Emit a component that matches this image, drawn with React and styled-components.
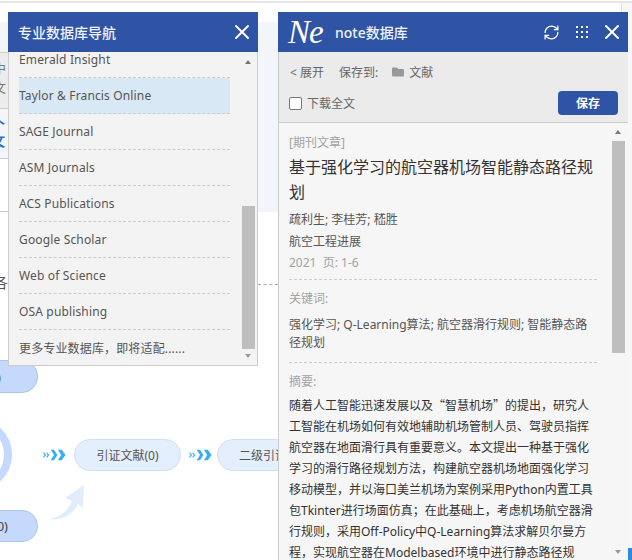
import React from 'react';
import styled, { createGlobalStyle } from 'styled-components';
import { FaFolder } from 'react-icons/fa';
import { RefreshCw, X } from 'lucide-react';

const GlobalStyle = createGlobalStyle`
  html, body {
    margin: 0;
    padding: 0;
    background: #fff;
    overflow: hidden;
  }
  * {
    box-sizing: border-box;
  }
`;

const FONT = '"Noto Sans", "Noto Sans CJK SC", sans-serif';

const Canvas = styled.div`
  position: relative;
  width: 632px;
  height: 560px;
  overflow: hidden;
  background: #fff;
  font-family: ${FONT};
  color: #444;
`;

const TopRule = styled.div`
  height: 2px;
  margin-top: 1px;
  background: #e6e6e6;
`;

const Band = styled.div`
  position: absolute;
  left: 0;
  top: 22px;
  width: 278px;
  height: 190px;
  background: #f2f6fb;
`;

const SideStrip = styled.div`
  position: absolute;
  right: 0;
  top: 3px;
  width: 11px;
  height: 557px;
  background: #f7f7f7;
  border-left: 1px solid #e4e4e4;
`;

const BlueCorner = styled.div`
  position: absolute;
  right: 0;
  top: 548px;
  width: 4px;
  height: 12px;
  background: #2a8be6;
`;

const CutBox = styled.div`
  position: absolute;
  left: 0;
  top: ${(p) => p.$top}px;
  width: 10px;
  height: ${(p) => p.$height}px;
  background: ${(p) => p.$fill};
  border-top: 1px solid #ccc;
  border-bottom: 1px solid #ccc;
  overflow: hidden;
  padding-top: 6px;
`;

const CutText = styled.div`
  margin-left: -7px;
  font-size: 13px;
  line-height: 19px;
  color: #777;
`;

const CutLink = styled.div`
  position: absolute;
  left: -9px;
  top: 117px;
  width: 16px;
  font-size: 14px;
  line-height: 16px;
  font-weight: 700;
  color: #2f6fc0;
`;

const CutLabel = styled.div`
  position: absolute;
  left: -7px;
  top: 271px;
  font-size: 15px;
  color: #555;
`;

const DashLine = styled.div`
  position: absolute;
  left: 258px;
  top: 284px;
  width: 20px;
  border-top: 1px dashed #aaa;
`;

const SidePill = styled.div`
  position: absolute;
  left: -60px;
  top: ${(p) => p.$top}px;
  width: 98px;
  height: ${(p) => p.$height}px;
  padding-right: ${(p) => p.$inset}px;
  display: flex;
  align-items: center;
  justify-content: flex-end;
  border: 1px solid #abc5ef;
  border-radius: 16px;
  background: #c5d9fc;
  font-size: 13px;
  color: #444;
`;

const Ring = styled.div`
  position: absolute;
  left: -61px;
  top: 418px;
  width: 73px;
  height: 73px;
  border: 8px solid #c5d9fc;
  border-radius: 50%;
`;

const FlowRow = styled.div`
  position: absolute;
  left: 35px;
  top: 439px;
  display: flex;
  align-items: center;
`;

const FlowPill = styled.div`
  flex: none;
  width: 107px;
  height: 32px;
  display: flex;
  align-items: center;
  justify-content: ${(p) => (p.$start ? 'flex-start' : 'center')};
  padding-left: ${(p) => (p.$start ? '21px' : '0')};
  border: 1px solid #cfe0f4;
  border-radius: 16px;
  background: #e3effc;
  font-size: 12px;
  color: #555;
  white-space: nowrap;
`;

const ChevronSvg = styled.svg`
  flex: none;
  margin: 0 ${(p) => p.$gap}px 0 8px;
`;

const Chevrons = ({ gap }) => (
  <ChevronSvg $gap={gap} width="23" height="12" viewBox="0 0 24 12">
    <path d="M0.5 3.5 L2.5 6 L0.5 8.5" fill="none" stroke="#45b4f2" strokeWidth="1.3" />
    <path d="M3.8 3.5 L5.8 6 L3.8 8.5" fill="none" stroke="#45b4f2" strokeWidth="1.3" />
    <path d="M8 0.5 H11.5 L15 6 L11.5 11.5 H8 L11.5 6 Z" fill="#35b0f5" />
    <path d="M15.5 0.5 H19.5 L23.5 6 L19.5 11.5 H15.5 L19 6 Z" fill="#35b0f5" />
  </ChevronSvg>
);

const CurveSvg = styled.svg`
  position: absolute;
  left: 49px;
  top: 484px;
`;

const CurveArrow = () => (
  <CurveSvg width="36" height="36" viewBox="0 0 36 36">
    <defs>
      <linearGradient id="curveFade" x1="0" y1="1" x2="1" y2="0">
        <stop offset="0" stopColor="#d3e4f8" stopOpacity="0.7" />
        <stop offset="1" stopColor="#e2eefb" />
      </linearGradient>
    </defs>
    <path d="M0 35 C12 33 20 26 23 17 L16 14 L35 1 L34 24 L29 20 C25 30 12 37 0 35 Z" fill="url(#curveFade)" />
  </CurveSvg>
);

const Panel = styled.section`
  position: absolute;
  left: ${(p) => p.$left}px;
  top: 12px;
  width: ${(p) => p.$width}px;
  height: ${(p) => p.$height}px;
  display: flex;
  flex-direction: column;
  overflow: hidden;
`;

const PanelHeader = styled.header`
  flex: none;
  height: 40px;
  display: flex;
  align-items: center;
  padding: 0 4px 0 10px;
  background: #2f54a5;
  color: #fff;
`;

const HeaderTitle = styled.h2`
  flex: 1;
  margin: 0;
  font-size: 14px;
  font-weight: 500;
  color: #eef3fc;
`;

const CloseIcon = styled(X)`
  display: block;
  flex: none;
`;

const NavBody = styled.div`
  position: relative;
  flex: 1;
  min-height: 0;
  overflow: hidden;
  padding: 0 27px 0 10px;
  background: #f3f3f3;
  border: 1px solid #ccc;
  border-top: none;
`;

const NavList = styled.ul`
  list-style: none;
  margin: -10px 0 0;
  padding: 0;
`;

const NavItem = styled.li`
  height: 36px;
  display: flex;
  align-items: center;
  border-bottom: 1px dashed #ccc;
  background: ${(p) => (p.$active ? '#d9e8f5' : 'transparent')};
  font-size: 12px;
  letter-spacing: 0.15px;
  color: #555;
  white-space: nowrap;
`;

const Scrollbar = styled.div`
  position: absolute;
  right: ${(p) => p.$right}px;
  top: 0;
  bottom: 0;
  width: 13px;
`;

const ScrollThumb = styled.div`
  position: absolute;
  left: 0;
  right: 0;
  top: ${(p) => p.$top}px;
  height: ${(p) => p.$height}px;
  background: #bebebe;
`;

const ScrollArrow = styled.div`
  position: absolute;
  left: 3px;
  ${(p) => (p.$down ? `bottom: ${p.$offset}px;` : `top: ${p.$offset}px;`)}
  width: 0;
  height: 0;
  border-left: 3.5px solid transparent;
  border-right: 3.5px solid transparent;
  ${(p) => (p.$down ? 'border-top: 4px solid #9a9a9a;' : 'border-bottom: 4px solid #777;')}
`;

const Logo = styled.span`
  flex: none;
  width: 47px;
  font-family: "Liberation Serif", serif;
  font-style: italic;
  font-size: 33px;
  line-height: 40px;
  letter-spacing: -1px;
  color: #fff;
`;

const HeaderActions = styled.div`
  display: flex;
  align-items: center;
  gap: 16px;
`;

const HeaderClose = styled(CloseIcon)`
  margin-left: -4px;
`;

const Toolbar = styled.div`
  flex: none;
  height: 71px;
  padding: 10px 10px 0 10px;
  background: #ebebeb;
  border-left: 1px solid #ccc;
  border-bottom: 1px solid #ccc;
  font-size: 12px;
  color: #666;
`;

const ToolRow = styled.div`
  display: flex;
  align-items: center;
  height: 20px;
`;

const SaveRow = styled(ToolRow)`
  height: 24px;
  margin-top: 9px;
  justify-content: space-between;
`;

const Expand = styled.span`
  margin: 0 15px 0 1px;
`;

const FolderName = styled.span`
  margin-left: 5px;
`;

const FolderIcon = styled(FaFolder)`
  margin-left: 14px;
  color: #999;
`;

const CheckLabel = styled.label`
  display: flex;
  align-items: center;
  gap: 5px;
`;

const CheckBox = styled.span`
  width: 13px;
  height: 13px;
  border: 1px solid #767676;
  border-radius: 2px;
  background: #fff;
`;

const SaveButton = styled.button`
  width: 60px;
  height: 24px;
  padding: 0;
  border: none;
  border-radius: 4px;
  background: #2f54a5;
  color: #fff;
  font-family: ${FONT};
  font-size: 12px;
  font-weight: 700;
`;

const Article = styled.article`
  position: relative;
  flex: 1;
  min-height: 0;
  overflow: hidden;
  padding: 10px 31px 0 10px;
  background: #f6f6f6;
  border-left: 1px solid #ccc;
  font-size: 12px;
  color: #444;
`;

const Muted = styled.div`
  color: #a3a3a3;
  line-height: 20px;
`;

const ArticleTitle = styled.h1`
  margin: 2px 0 4px;
  font-size: 16px;
  line-height: 25px;
  font-weight: 400;
  color: #333;
`;

const MetaLine = styled.div`
  line-height: 22px;
  color: #555;
`;

const Section = styled.div`
  padding-bottom: 6px;
  border-bottom: 1px dashed #ccc;
`;

const KeyLabel = styled(Muted)`
  margin-top: 9px;
`;

const Keywords = styled.div`
  margin-top: 7px;
  line-height: 18px;
  color: #555;
  padding-bottom: 10px;
  border-bottom: 1px dashed #ccc;
`;

const Abstract = styled.p`
  margin: 2px 0 0;
  line-height: 21px;
  color: #333;
`;

const Quote = styled.span`
  font-family: "Noto Sans CJK SC", sans-serif;
`;

const GridIcon = () => (
  <svg width="12" height="12" viewBox="0 0 12 12" fill="#fff">
    {[0, 5, 10].map((y) =>
      [0, 5, 10].map((x) => <rect key={`${x}-${y}`} x={x} y={y} width="2" height="2" />)
    )}
  </svg>
);

const databases = [
  'Emerald Insight',
  'Taylor & Francis Online',
  'SAGE Journal',
  'ASM Journals',
  'ACS Publications',
  'Google Scholar',
  'Web of Science',
  'OSA publishing',
  '更多专业数据库，即将适配......',
];

const App = () => (
  <Canvas lang="zh-CN">
    <GlobalStyle />
    <TopRule />
    <Band />
    <SideStrip />
    <BlueCorner />

    <CutBox $top={52} $height={57} $fill="#ececec">
      <CutText>中<br />文</CutText>
    </CutBox>
    <CutLink>个<br />文</CutLink>
    <CutBox $top={158} $height={54} $fill="#fff" />
    <CutLabel>各</CutLabel>
    <DashLine />

    <SidePill $top={360} $height={33} $inset={36}>)</SidePill>
    <Ring />
    <SidePill $top={510} $height={32} $inset={29}>0)</SidePill>
    <CurveArrow />
    <FlowRow>
      <Chevrons gap={8} />
      <FlowPill>引证文献(0)</FlowPill>
      <Chevrons gap={5} />
      <FlowPill $start>二级引证文献(0)</FlowPill>
    </FlowRow>

    <Panel $left={8} $width={250} $height={354}>
      <PanelHeader>
        <HeaderTitle>专业数据库导航</HeaderTitle>
        <CloseIcon size={24} strokeWidth={2} color="#fff" />
      </PanelHeader>
      <NavBody>
        <NavList>
          {databases.map((name, i) => (
            <NavItem key={name} $active={i === 1}>{name}</NavItem>
          ))}
        </NavList>
        <Scrollbar $right={2}>
          <ScrollArrow $offset={8} />
          <ScrollThumb $top={154} $height={143} />
          <ScrollArrow $down $offset={7} />
        </Scrollbar>
      </NavBody>
    </Panel>

    <Panel $left={278} $width={350} $height={548}>
      <PanelHeader>
        <Logo>Ne</Logo>
        <HeaderTitle>note数据库</HeaderTitle>
        <HeaderActions>
          <RefreshCw size={17} strokeWidth={1.8} color="#fff" />
          <GridIcon />
          <HeaderClose size={24} strokeWidth={2} color="#fff" />
        </HeaderActions>
      </PanelHeader>
      <Toolbar>
        <ToolRow>
          <Expand>&lt; 展开</Expand>
          <span>保存到:</span>
          <FolderIcon size={12} />
          <FolderName>文献</FolderName>
        </ToolRow>
        <SaveRow>
          <CheckLabel>
            <CheckBox />
            下载全文
          </CheckLabel>
          <SaveButton>保存</SaveButton>
        </SaveRow>
      </Toolbar>
      <Article>
        <Muted>[期刊文章]</Muted>
        <ArticleTitle>基于强化学习的航空器机场智能静态路径规划</ArticleTitle>
        <MetaLine>疏利生; 李桂芳; 嵇胜</MetaLine>
        <MetaLine>航空工程进展</MetaLine>
        <Section>
          <Muted>2021&nbsp;&nbsp;页: 1-6</Muted>
        </Section>
        <KeyLabel>关键词:</KeyLabel>
        <Keywords>强化学习; Q-Learning算法; 航空器滑行规则; 智能静态路径规划</Keywords>
        <KeyLabel>摘要:</KeyLabel>
        <Abstract>
          随着人工智能迅速发展以及<Quote>“智慧机场”</Quote>的提出，研究人工智能在机场如何有效地辅助机场管制人员、驾驶员指挥航空器在地面滑行具有重要意义。本文提出一种基于强化学习的滑行路径规划方法，构建航空器机场地面强化学习移动模型，并以海口美兰机场为案例采用Python内置工具包Tkinter进行场面仿真；在此基础上，考虑机场航空器滑行规则，采用Off-Policy中Q-Learning算法求解贝尔曼方程，实现航空器在Modelbased环境中进行静态路径规划。
        </Abstract>
        <Scrollbar $right={3}>
          <ScrollArrow $offset={7} />
          <ScrollThumb $top={18} $height={212} />
          <ScrollArrow $down $offset={6} />
        </Scrollbar>
      </Article>
    </Panel>
  </Canvas>
);

export default App;
